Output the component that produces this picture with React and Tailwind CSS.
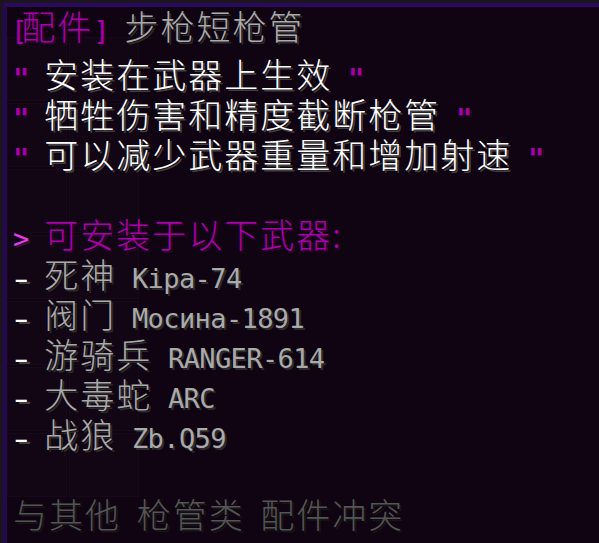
import React from "react";

// Tooltip text runs: CJK in Noto Sans CJK, Latin in a monospace face
const C = ({ className = "", children }) => (
  <span className={"font-['Noto_Sans_CJK_SC',sans-serif] font-light text-[34px] tracking-[2px] " + className}>
    {children}
  </span>
);
const L = ({ className = "", children }) => (
  <span className={"font-['DejaVu_Sans_Mono',monospace] text-[27px] tracking-[-0.6px] " + className}>{children}</span>
);

const WHITE = "text-white [text-shadow:2px_2px_0_#3f3f3f]";
const GRAY = "text-[#aaaaaa] [text-shadow:2px_2px_0_#2a2a2a]";
const PURPLE = "text-[#aa00aa] [text-shadow:2px_2px_0_#2a002a]";
const PINK = "text-[#e23ee6] [text-shadow:2px_2px_0_#3a0f3a]";
const DARK = "text-[#555555] [text-shadow:2px_2px_0_#151515]";

const Row = ({ children, className = "" }) => (
  <div className={"h-10 leading-[40px] whitespace-pre " + className}>{children}</div>
);

const Quote = ({ text }) => (
  <Row>
    <L className={PURPLE + " font-bold"}>{'" '}</L>
    <C className={WHITE}>{text}</C>
    <L className={PURPLE + " font-bold"}>{' "'}</L>
  </Row>
);

const Weapon = ({ cn, name }) => (
  <Row>
    <L className={WHITE}>
      <span className="inline-block origin-center scale-x-[1.6]">-</span>{" "}
    </L>
    <C className={GRAY}>{cn}</C>
    <L className={GRAY}>{" " + name}</L>
  </Row>
);

// faint inventory slots showing through the translucent tooltip
const Slots = () => (
  <div className="absolute inset-0 grid grid-cols-[60px_70px] grid-rows-[repeat(7,64px)] content-start pt-[30px] gap-[2px]">
    {Array.from({ length: 14 }).map((_, i) => (
      <div key={i} className="border border-[#ffffff05] bg-[#ffffff03]" />
    ))}
  </div>
);

export default function App() {
  return (
    <div className="relative w-[599px] h-[543px] overflow-hidden bg-[#1b141d]">
      <div className="absolute left-[3px] top-[3px] w-[700px] h-[600px] bg-[#100412] border-t-4 border-l-4 border-t-[#2a0a5e] border-l-[#250852]">
        <Slots />
        <div className="relative pl-[6px] -mt-[1px]">
          <Row className="mb-2">
            <L className={PURPLE + " -ml-[2px] tracking-[-6px]"}>[</L>
            <C className={PURPLE}>配件</C>
            <L className={PURPLE}>]</L>
            <L className={GRAY}> </L>
            <C className={GRAY}>步枪短枪管</C>
          </Row>
          <Quote text="安装在武器上生效" />
          <Quote text="牺牲伤害和精度截断枪管" />
          <Quote text="可以减少武器重量和增加射速" />
          <Row />
          <Row>
            <L className={PINK}>{"> "}</L>
            <C className={PURPLE}>可安装于以下武器:</C>
          </Row>
          <Weapon cn="死神" name="Kipa-74" />
          <Weapon cn="阀门" name="Мосина-1891" />
          <Weapon cn="游骑兵" name="RANGER-614" />
          <Weapon cn="大毒蛇" name="ARC" />
          <Weapon cn="战狼" name="Zb.Q59" />
          <Row />
          <Row>
            <C className={DARK}>与其他</C>
            <L className={DARK}> </L>
            <C className={DARK}>枪管类</C>
            <L className={DARK}> </L>
            <C className={DARK}>配件冲突</C>
          </Row>
        </div>
      </div>
    </div>
  );
}
